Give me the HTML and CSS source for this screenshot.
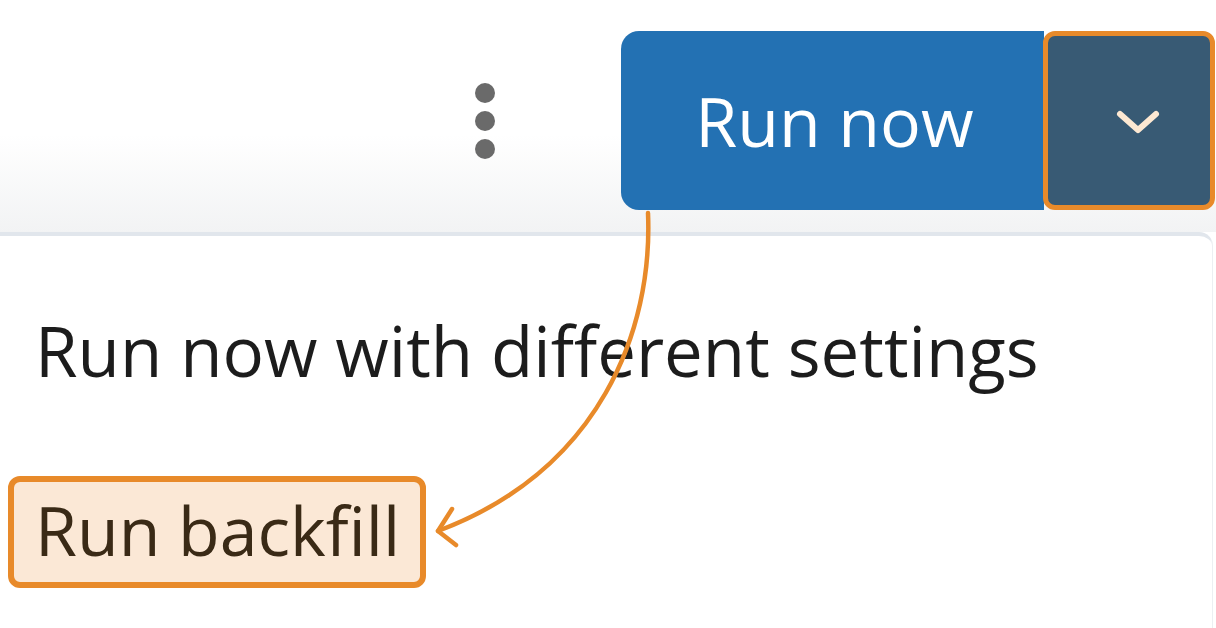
FILE: index.html
```html
<!DOCTYPE html>
<html lang="en">
<head>
<meta charset="utf-8">
<title>Run now menu</title>
<link rel="stylesheet" href="styles.css">
</head>
<body>
<div class="page">
  <header class="topbar">
    <div class="kebab" aria-label="More options">
      <span class="dot"></span><span class="dot"></span><span class="dot"></span>
    </div>
    <div class="split">
      <button class="run">Run now</button>
      <button class="toggle" aria-label="More run options">
        <svg width="46" height="26" viewBox="0 0 46 26"><path d="M5 5 L23 21 L41 5" fill="none" stroke="#fde8d2" stroke-width="6" stroke-linecap="round" stroke-linejoin="round"/></svg>
      </button>
    </div>
  </header>
  <div class="menu">
    <div class="item first">Run now with different settings</div>
    <div class="item highlight">Run backfill</div>
  </div>
  <svg class="annot" width="1216" height="628" viewBox="0 0 1216 628">
    <path d="M648 213 C 653 330, 600 470, 438 531" fill="none" stroke="#e88a2a" stroke-width="4.5" stroke-linecap="round"/>
    <path d="M452 509 L438 531 L456 545" fill="none" stroke="#e88a2a" stroke-width="4.5" stroke-linecap="round" stroke-linejoin="round"/>
  </svg>
</div>
</body>
</html>
```
FILE: styles.css
```css
* { box-sizing: border-box; }
html, body { margin: 0; padding: 0; background: #fff; }
.page {
  position: relative;
  width: 1216px;
  height: 628px;
  overflow: hidden;
  font-family: "Open Sans", "Noto Sans", sans-serif;
}
.topbar {
  height: 232px;
  display: flex;
  justify-content: flex-end;
  align-items: flex-start;
  padding-top: 31px;
  padding-right: 1px;
  background: linear-gradient(#ffffff 0%, #ffffff 58%, #f2f3f4 100%);
}
.kebab {
  display: flex;
  flex-direction: column;
  gap: 8px;
  margin-top: 52px;
  margin-right: 126px;
}
.dot {
  width: 20px;
  height: 20px;
  border-radius: 50%;
  background: #6a6a6a;
}
.split {
  display: flex;
  height: 179px;
}
.run {
  width: 423px;
  border: 0;
  border-radius: 18px 0 0 18px;
  background: #2371b3;
  color: #fff;
  font-family: inherit;
  font-size: 68px;
  padding: 0 0 0 4px;
  display: flex;
  align-items: center;
  justify-content: center;
}
.toggle {
  width: 172px;
  margin-left: -1px;
  border: 5px solid #e88a2a;
  border-radius: 12px;
  background: #385a74;
  padding: 2px 0 0 18px;
  display: flex;
  align-items: center;
  justify-content: center;
}
.menu {
  height: 396px;
  margin-right: 3px;
  border-top: 4px solid #e1e6ec;
  border-right: 1px solid #eceff2;
  border-radius: 0 14px 0 0;
  padding: 80px 0 0 8px;
  color: #1c1c1c;
  font-size: 69px;
}
.item {
  line-height: 1;
}
.first {
  padding-left: 27px;
  height: 160px;
}
.highlight {
  display: inline-block;
  font-size: 68px;
  color: #3a2a16;
  background: #fbe8d6;
  border: 6px solid #e88a2a;
  border-radius: 12px;
  padding: 14px 20px 18px 21px;
}
.annot {
  position: absolute;
  left: 0;
  top: 0;
  pointer-events: none;
}
```
